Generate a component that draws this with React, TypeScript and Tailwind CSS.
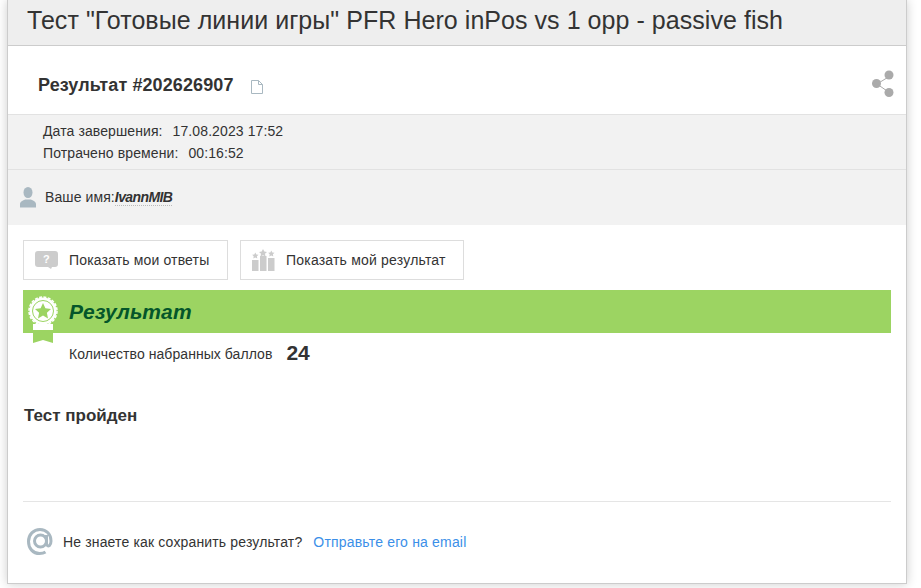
import React from "react";

function CopyIcon() {
  return (
    <svg width="14" height="14" viewBox="0 0 14 14" className="ml-[16px] mt-[3px]">
      <path d="M1.500 0.500h7l4 4v9h-11z M8.500 0.500v4h4" fill="none" stroke="#a9b8c1" strokeWidth="1" />
    </svg>
  );
}

function ShareIcon() {
  return (
    <svg width="24" height="28" viewBox="0 0 24 28">
      <path d="M6 14 L19 6 M6 14 L19 23" stroke="#aaa" strokeWidth="1" />
      <circle cx="5.500" cy="13.500" r="4.500" fill="#aaa" />
      <circle cx="18" cy="5" r="4.500" fill="#aaa" />
      <circle cx="18" cy="22.500" r="4.500" fill="#aaa" />
    </svg>
  );
}

function UserIcon() {
  return (
    <svg width="16" height="21" viewBox="0 0 16 21">
      <ellipse cx="8" cy="5.500" rx="4.500" ry="5.500" fill="#a9b8c1" />
      <path d="M0 20.500v-3.500c0-2.500 3-3.500 5-4.500h6c2 1 5 2 5 4.500v3.500z" fill="#a9b8c1" />
    </svg>
  );
}

function QuestionIcon() {
  return (
    <svg width="24" height="20" viewBox="0 0 24 20">
      <path d="M3 1h17a3 3 0 0 1 3 3v10a3 3 0 0 1-3 3h-3l-1 2-3-2H3a3 3 0 0 1-3-3V4a3 3 0 0 1 3-3z" fill="#ccc" />
      <text x="11.500" y="13" textAnchor="middle" fontSize="11" fontWeight="700" fill="#fff" fontFamily="Liberation Sans, sans-serif">?</text>
    </svg>
  );
}

function PodiumIcon() {
  return (
    <svg width="23" height="22" viewBox="0 0 23 22">
      <rect x="0" y="11" width="6.500" height="11" fill="#ccc" />
      <rect x="8" y="7" width="6.500" height="15" fill="#ccc" />
      <rect x="16" y="9" width="6.500" height="13" fill="#ccc" />
      <path d="M11 0l1.300 2.500 2.700.4-2 1.900.5 2.700-2.500-1.300-2.500 1.300.5-2.700-2-1.900 2.700-.4z" fill="#ccc" />
      <path d="M3.300 3.500l1 2 2.200.3-1.600 1.500.4 2.200-2-1-2 1 .4-2.200L.1 5.800l2.200-.3z" fill="#ccc" />
      <path d="M19.300 1.500l1 2 2.200.3-1.600 1.500.4 2.200-2-1-2 1 .4-2.200-1.600-1.500 2.200-.3z" fill="#ccc" />
    </svg>
  );
}

function MedalIcon() {
  return (
    <svg width="30" height="48" viewBox="0 0 30 48">
      <path d="M5 28h20v19l-10-3-10 3z" fill="#9cd462" />
      <rect x="5" y="28" width="20" height="6" fill="#fff" />
      <circle cx="15" cy="15" r="13.500" fill="#fff" />
      <circle cx="15" cy="15" r="14" fill="none" stroke="#fff" strokeWidth="1.500" strokeDasharray="3 1.400" />
      <circle cx="15" cy="15" r="10.500" fill="none" stroke="#9cd462" strokeWidth="1" />
      <path d="M15 7l2.400 5.200 5.600.7-4.100 3.900 1.100 5.600-5-2.800-5 2.800 1.100-5.600L7 12.900l5.600-.7z" fill="#9cd462" />
    </svg>
  );
}

function AtIcon() {
  return (
    <svg width="26" height="28" viewBox="0 0 26 28" fill="none" stroke="#a9b8c1" strokeWidth="3">
      <circle cx="13.500" cy="13" r="6" />
      <path d="M19.500 7v8.500c0 2 1.500 3 3 2 1-.8 1.500-2.500 1.500-4.500 0-6.500-4.500-11.500-11-11.500S1.500 6.500 1.500 13.500 6 25.500 12.500 25.500c2.500 0 4.500-.5 6-1.500" />
    </svg>
  );
}

export default function App() {
  return (
    <div className="min-h-[588px] bg-white text-[#333] font-['Liberation_Sans',Arial,sans-serif]">
      <div className="ml-[7px] w-[900px] h-[584px] border border-t-0 border-[#ccc] shadow-[0_0_10px_rgba(0,0,0,0.2)] flex flex-col bg-white">
        {/* Title */}
        <div className="h-[46px] bg-[#eeeeee] border-b border-[#ccc] pl-[19px] pt-[5px] text-[25px] leading-[30px] tracking-[0.05px] whitespace-nowrap">
          Тест "Готовые линии игры" PFR Hero inPos vs 1 opp - passive fish
        </div>

        {/* Result id */}
        <div className="h-[68px] flex items-center pl-[30px] pr-[11px] pt-[10px]">
          <span className="text-[18px] font-bold tracking-[0.1px]">Результат #202626907</span>
          <CopyIcon />
          <span className="ml-auto mt-[-2px]">
            <ShareIcon />
          </span>
        </div>

        {/* Meta */}
        <div className="h-[56px] bg-[#f2f2f2] border-y border-[#e2e2e2] pl-[35px] text-[14px] leading-[22px] pt-[5px] tracking-[0.1px]">
          <div className="flex">
            <span>Дата завершения:</span>
            <span className="ml-[10px]">17.08.2023 17:52</span>
          </div>
          <div className="flex">
            <span>Потрачено времени:</span>
            <span className="ml-[10px]">00:16:52</span>
          </div>
        </div>

        {/* Name */}
        <div className="h-[55px] bg-[#f2f2f2] flex items-center pl-[12px] text-[14px]">
          <UserIcon />
          <span className="ml-[9px] tracking-[0.1px]">Ваше имя:</span>
          <span className="font-bold italic tracking-[-0.6px] border-b border-dotted border-[#bbb] leading-[15px]">IvannMIB</span>
        </div>

        {/* Body */}
        <div className="flex-1 flex flex-col px-[15px] pt-[15px]">
          <div className="flex gap-[12px]">
            <div className="w-[205px] h-[40px] border border-[#ddd] flex items-center pl-[11px] text-[14px] tracking-[0.15px]">
              <QuestionIcon />
              <span className="ml-[10px]">Показать мои ответы</span>
            </div>
            <div className="w-[224px] h-[40px] border border-[#ddd] flex items-center pl-[11px] text-[14px] tracking-[0.2px]">
              <PodiumIcon />
              <span className="ml-[11px]">Показать мой результат</span>
            </div>
          </div>

          <div className="relative mt-[10px] h-[43px] bg-[#9cd462] flex items-center pl-[46px]">
            <span className="absolute left-[5px] top-[6px]">
              <MedalIcon />
            </span>
            <span className="text-[21px] font-bold italic tracking-[0.2px] text-[#04562a]">Результат</span>
          </div>

          <div className="flex items-center h-[40px] pl-[46px]">
            <span className="text-[14px] mt-[3px] tracking-[0.06px]">Количество набранных баллов</span>
            <span className="ml-[14px] text-[21px] font-bold">24</span>
          </div>

          <div className="mt-[33px] text-[17px] font-bold leading-[20px] pl-[1px]">Тест пройден</div>

          <div className="mt-[75px] border-t border-[#e5e5e5]" />

          <div className="flex items-center mt-[26px] pl-[4px] text-[14px] tracking-[0.15px]">
            <AtIcon />
            <span className="ml-[10px]">Не знаете как сохранить результат?</span>
            <span className="ml-[11px] text-[#3b8fe8] tracking-[0.18px]">Отправьте его на email</span>
          </div>
        </div>
      </div>
    </div>
  );
}
